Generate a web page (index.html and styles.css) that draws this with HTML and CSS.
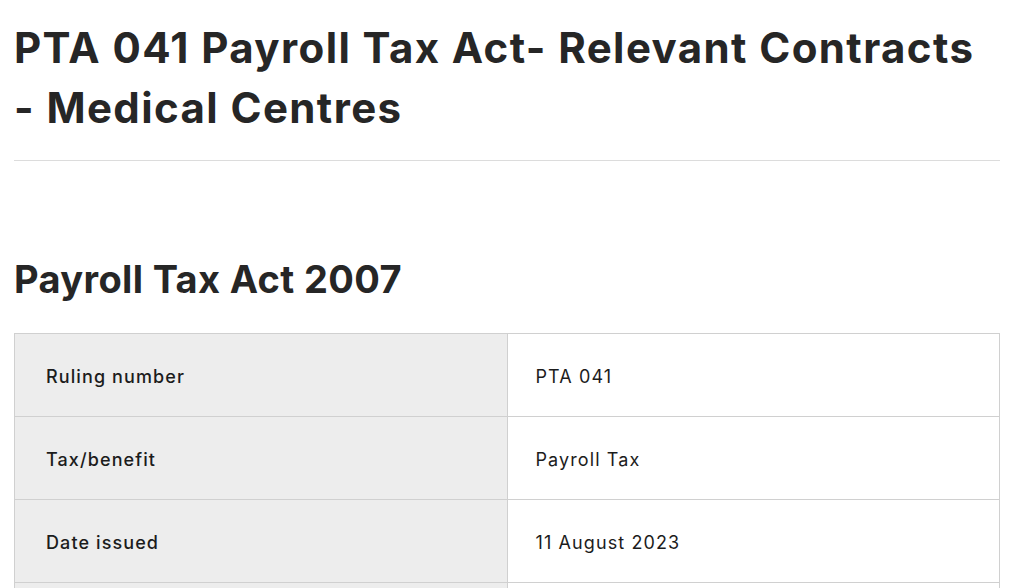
FILE: index.html
```html
<!DOCTYPE html>
<html lang="en">
<head>
<meta charset="utf-8">
<title>PTA 041 Payroll Tax Act- Relevant Contracts - Medical Centres</title>
<link rel="stylesheet" href="styles.css">
</head>
<body>
<main class="page">
  <h1 class="title">PTA 041 Payroll Tax Act- Relevant Contracts - Medical Centres</h1>
  <hr class="divider">
  <h2 class="subtitle">Payroll Tax Act 2007</h2>
  <table class="info">
    <colgroup><col class="col-label"><col class="col-value"></colgroup>
    <tbody>
      <tr><th>Ruling number</th><td>PTA 041</td></tr>
      <tr><th>Tax/benefit</th><td>Payroll Tax</td></tr>
      <tr><th>Date issued</th><td>11 August 2023</td></tr>
      <tr><th>Status</th><td>Current</td></tr>
    </tbody>
  </table>
</main>
</body>
</html>
```
FILE: styles.css
```css
html, body {
  margin: 0;
  padding: 0;
  background: #fff;
}
body {
  font-family: Inter, "Noto Sans", "Liberation Sans", sans-serif;
  color: #1c1c1c;
}
.page {
  width: 986px;
  margin-left: 14px;
  padding-top: 18px;
}
.title {
  margin: 0;
  font-size: 42px;
  font-weight: 700;
  line-height: 60px;
  color: #262626;
  letter-spacing: 1.4px;
}
.divider {
  border: 0;
  border-top: 1px solid #dcdcdc;
  margin: 22px 0 0 0;
  height: 0;
}
.subtitle {
  margin: 94px 0 0 0;
  font-size: 38px;
  font-weight: 700;
  line-height: 48px;
  color: #262626;
  letter-spacing: 0.35px;
}
.info {
  width: 100%;
  margin-top: 30px;
  border-collapse: collapse;
  table-layout: fixed;
  font-size: 18px;
  line-height: 22px;
  letter-spacing: 1.1px;
}
.col-label, .col-value {
  width: 50%;
}
.info th, .info td {
  border: 1px solid #d0d0d0;
  padding: 32px 31px 28px 31px;
  text-align: left;
  vertical-align: middle;
}
.info th {
  background: #ededed;
  font-weight: 500;
}
.info td {
  background: #fff;
  font-weight: 400;
  padding-left: 28px;
}
```
